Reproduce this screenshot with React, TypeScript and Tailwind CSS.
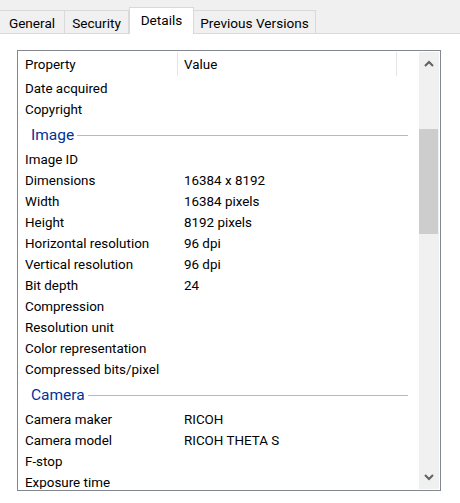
function Tab({ label, w, active }: { label: string; w: string; active?: boolean }) {
  return active ? (
    <div className={`${w} h-[27px] relative z-10 -mb-[1px] bg-white border-x border-t border-[#d9d9d9] flex justify-center pt-[3px] text-[13.6px] leading-[19px] text-black`}>{label}</div>
  ) : (
    <div className={`${w} h-[23px] bg-[#f0f0f0] border-t border-r border-[#d9d9d9] flex justify-center pt-[3px] text-[13.6px] leading-[19px] text-black`}>{label}</div>
  );
}
function Row({ k, v }: { k: string; v?: string }) {
  return (
    <div className="h-[21px] flex pt-[1px] leading-[20px] shrink-0 text-[13.4px] text-black whitespace-nowrap">
      <div className="w-[165px] pl-[6px]">{k}</div>
      <div>{v}</div>
    </div>
  );
}
function Group({ label }: { label: string }) {
  return (
    <div className="h-[21px] shrink-0 flex items-center pl-[12px] pr-[11px] gap-[3px]">
      <span className="text-[15.5px] text-[#003399]">{label}</span>
      <div className="flex-1 h-[1px] bg-[#b0b8d4]" />
    </div>
  );
}
export default function App() {
  return (
    <div className="w-[460px] h-[503px] bg-white overflow-hidden font-['Roboto',sans-serif]">
      <div className="h-[34px] bg-[#f0f0f0] border-b border-[#d9d9d9] flex items-end">
        <Tab label="General" w="w-[65px]" />
        <Tab label="Security" w="w-[64px]" />
        <Tab label="Details" w="w-[65px]" active />
        <Tab label="Previous Versions" w="w-[122px]" />
      </div>
      <div className="ml-[17px] mt-[16px] w-[424px] h-[441px] border border-[#828790] flex p-[1px] overflow-hidden">
        <div className="flex-1 min-w-0 flex flex-col overflow-hidden">
          <div className="h-[24px] shrink-0 flex text-[13.4px] leading-[20px] text-black">
            <div className="w-[159px] h-full pl-[6px] pt-[3px] border-r border-[#e5e5e5]">Property</div>
            <div className="w-[219px] h-full pl-[6px] pt-[3px] border-r border-[#e5e5e5]">Value</div>
          </div>
          <div className="h-[2px] shrink-0" />
          <Row k="Date acquired" />
          <Row k="Copyright" />
          <div className="h-[5px] shrink-0" />
          <Group label="Image" />
          <div className="h-[3px] shrink-0" />
          <Row k="Image ID" />
          <Row k="Dimensions" v="16384 x 8192" />
          <Row k="Width" v="16384 pixels" />
          <Row k="Height" v="8192 pixels" />
          <Row k="Horizontal resolution" v="96 dpi" />
          <Row k="Vertical resolution" v="96 dpi" />
          <Row k="Bit depth" v="24" />
          <Row k="Compression" />
          <Row k="Resolution unit" />
          <Row k="Color representation" />
          <Row k="Compressed bits/pixel" />
          <div className="h-[5px] shrink-0" />
          <Group label="Camera" />
          <div className="h-[3px] shrink-0" />
          <Row k="Camera maker" v="RICOH" />
          <Row k="Camera model" v="RICOH THETA S" />
          <Row k="F-stop" />
          <Row k="Exposure time" />
        </div>
        <div className="w-[20px] shrink-0 bg-[#f0f0f0] flex flex-col">
          <div className="h-[20px] flex items-center justify-center pt-[3px] pr-[1px]">
            <svg width="10" height="7" viewBox="0 0 10 7"><path d="M1 6 L5 2 L9 6" fill="none" stroke="#606060" strokeWidth="2" /></svg>
          </div>
          <div className="h-[105px] mt-[57px] mr-[1px] bg-[#cdcdcd]" />
          <div className="flex-1" />
          <div className="h-[20px] flex items-center justify-center pb-[3px] pr-[1px]">
            <svg width="10" height="7" viewBox="0 0 10 7"><path d="M1 1 L5 5 L9 1" fill="none" stroke="#606060" strokeWidth="2" /></svg>
          </div>
        </div>
      </div>
    </div>
  );
}
